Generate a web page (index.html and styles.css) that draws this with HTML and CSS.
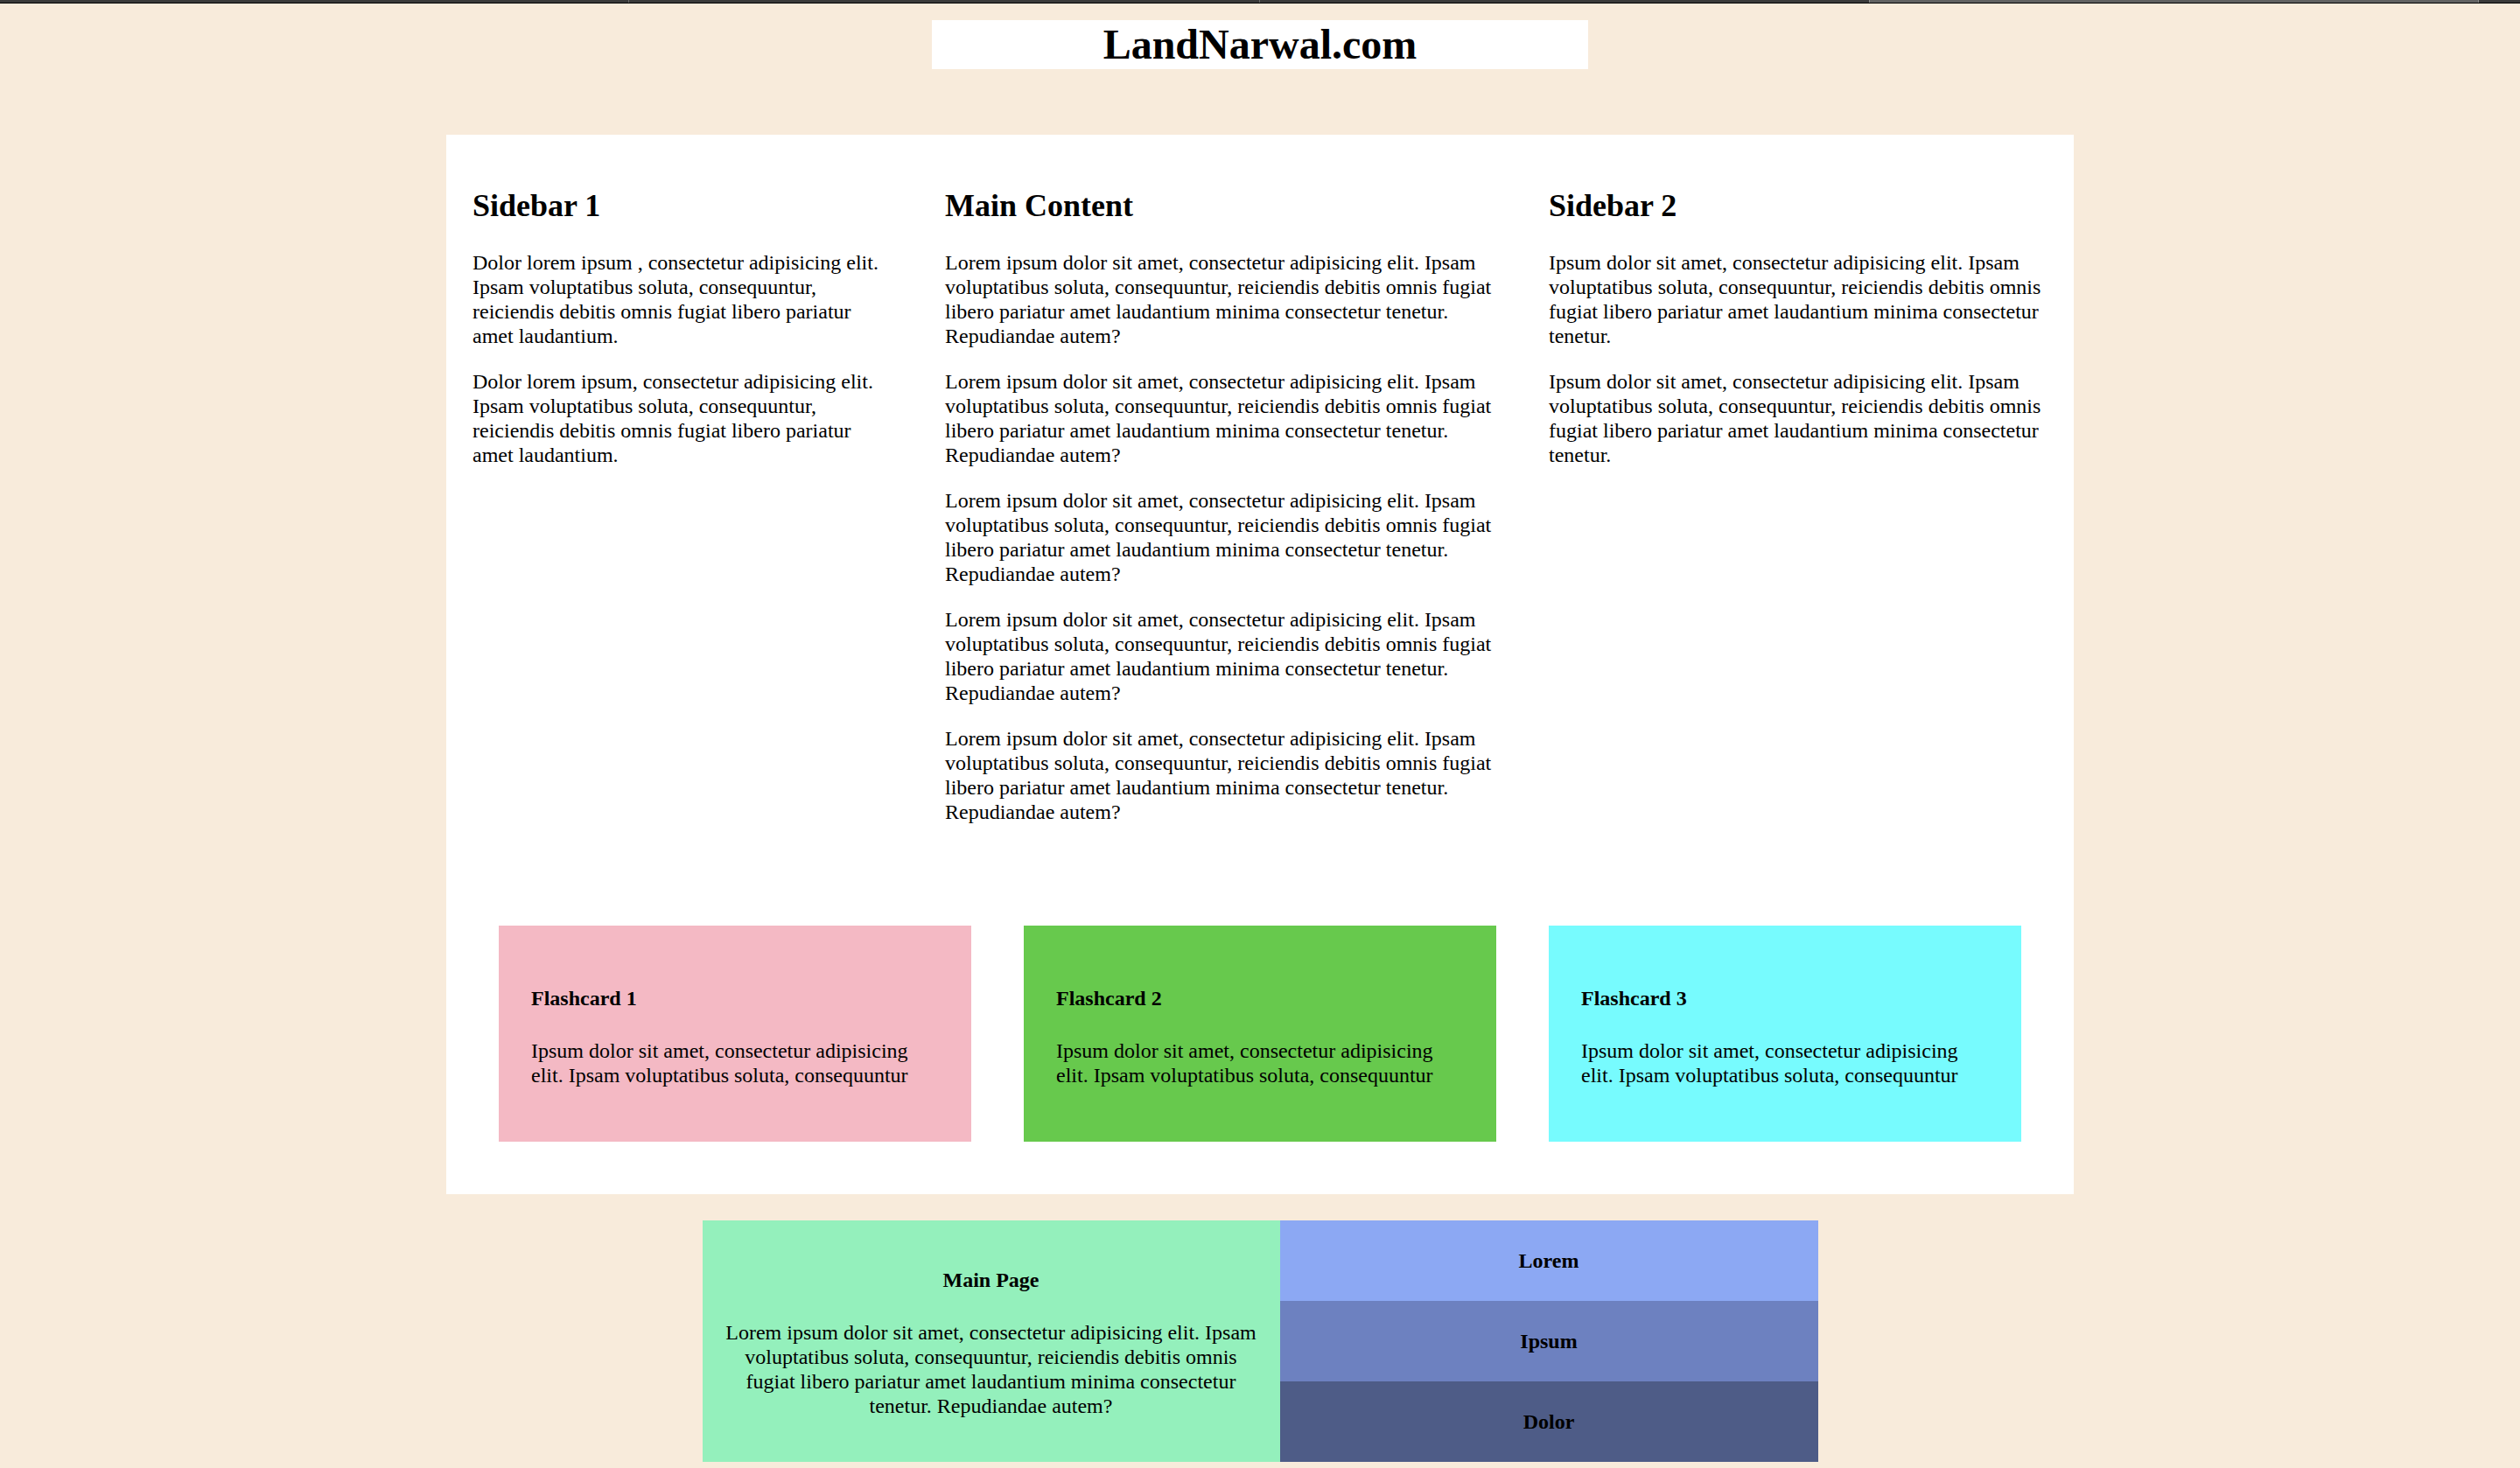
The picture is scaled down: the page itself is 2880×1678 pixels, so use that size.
FILE: index.html
```html
<!DOCTYPE html>
<html lang="en">
<head>
<meta charset="utf-8">
<title>LandNarwal.com</title>
<link rel="stylesheet" href="styles.css">
</head>
<body>
<div class="chrome">
  <div class="tab tab-1"></div>
  <div class="tab tab-2"></div>
  <div class="tab tab-3"></div>
  <div class="tab tab-active"></div>
  <div class="tab tab-rest"></div>
</div>

<header class="site-header">
  <h1 class="site-title">LandNarwal.com</h1>
</header>

<main class="page">
  <div class="columns">
    <section class="col col-side1">
      <h2>Sidebar 1</h2>
      <p>Dolor lorem ipsum , consectetur adipisicing elit. Ipsam voluptatibus soluta, consequuntur, reiciendis debitis omnis fugiat libero pariatur amet laudantium.</p>
      <p>Dolor lorem ipsum, consectetur adipisicing elit. Ipsam voluptatibus soluta, consequuntur, reiciendis debitis omnis fugiat libero pariatur amet laudantium.</p>
    </section>
    <section class="col col-main">
      <h2>Main Content</h2>
      <p>Lorem ipsum dolor sit amet, consectetur adipisicing elit. Ipsam voluptatibus soluta, consequuntur, reiciendis debitis omnis fugiat libero pariatur amet laudantium minima consectetur tenetur. Repudiandae autem?</p>
      <p>Lorem ipsum dolor sit amet, consectetur adipisicing elit. Ipsam voluptatibus soluta, consequuntur, reiciendis debitis omnis fugiat libero pariatur amet laudantium minima consectetur tenetur. Repudiandae autem?</p>
      <p>Lorem ipsum dolor sit amet, consectetur adipisicing elit. Ipsam voluptatibus soluta, consequuntur, reiciendis debitis omnis fugiat libero pariatur amet laudantium minima consectetur tenetur. Repudiandae autem?</p>
      <p>Lorem ipsum dolor sit amet, consectetur adipisicing elit. Ipsam voluptatibus soluta, consequuntur, reiciendis debitis omnis fugiat libero pariatur amet laudantium minima consectetur tenetur. Repudiandae autem?</p>
      <p>Lorem ipsum dolor sit amet, consectetur adipisicing elit. Ipsam voluptatibus soluta, consequuntur, reiciendis debitis omnis fugiat libero pariatur amet laudantium minima consectetur tenetur. Repudiandae autem?</p>
    </section>
    <section class="col col-side2">
      <h2>Sidebar 2</h2>
      <p>Ipsum dolor sit amet, consectetur adipisicing elit. Ipsam voluptatibus soluta, consequuntur, reiciendis debitis omnis fugiat libero pariatur amet laudantium minima consectetur tenetur.</p>
      <p>Ipsum dolor sit amet, consectetur adipisicing elit. Ipsam voluptatibus soluta, consequuntur, reiciendis debitis omnis fugiat libero pariatur amet laudantium minima consectetur tenetur.</p>
    </section>
  </div>

  <div class="flashcards">
    <div class="card card-pink">
      <h4>Flashcard 1</h4>
      <p>Ipsum dolor sit amet, consectetur adipisicing elit. Ipsam voluptatibus soluta, consequuntur</p>
    </div>
    <div class="card card-green">
      <h4>Flashcard 2</h4>
      <p>Ipsum dolor sit amet, consectetur adipisicing elit. Ipsam voluptatibus soluta, consequuntur</p>
    </div>
    <div class="card card-cyan">
      <h4>Flashcard 3</h4>
      <p>Ipsum dolor sit amet, consectetur adipisicing elit. Ipsam voluptatibus soluta, consequuntur</p>
    </div>
  </div>
</main>

<footer class="footer">
  <div class="footer-main">
    <h4>Main Page</h4>
    <p>Lorem ipsum dolor sit amet, consectetur adipisicing elit. Ipsam voluptatibus soluta, consequuntur, reiciendis debitis omnis fugiat libero pariatur amet laudantium minima consectetur tenetur. Repudiandae autem?</p>
  </div>
  <nav class="footer-nav">
    <div class="nav-item nav-lorem"><h4>Lorem</h4></div>
    <div class="nav-item nav-ipsum"><h4>Ipsum</h4></div>
    <div class="nav-item nav-dolor"><h4>Dolor</h4></div>
  </nav>
</footer>
</body>
</html>
```

FILE: styles.css
```css
html, body {
  margin: 0;
  padding: 0;
}

body {
  background: #f8ebdb;
  color: #000;
  font-family: "Liberation Serif", "Times New Roman", serif;
  font-size: 24px;
  line-height: 1.1667;
  padding-bottom: 7px;
}

/* thin browser-like strip at the very top */
.chrome {
  display: flex;
  height: 3px;
  background: #3a3a3a;
  border-bottom: 1px solid #000;
}
.tab {
  height: 3px;
}
.tab-1 { width: 718px; }
.tab-2 { width: 720px; border-left: 1px solid #6a6a6a; }
.tab-3 { width: 696px; border-left: 1px solid #6a6a6a; }
.tab-active { width: 695px; background: #626262; border-left: 1px solid #8a8a8a; border-right: 1px solid #8a8a8a; }
.tab-rest { flex: 1; }

/* header */
.site-header {
  display: flex;
  justify-content: center;
  padding-top: 19px;
}
.site-title {
  margin: 0;
  width: 750px;
  background: #fff;
  text-align: center;
  font-size: 48px;
  font-weight: bold;
}

/* main white container */
.page {
  width: 1860px;
  margin: 75px auto 0;
  background: #fff;
}

.columns {
  display: grid;
  grid-template-columns: 540px 690px 630px;
}
.col {
  padding: 30px;
}
.col h2 {
  font-size: 36px;
  margin: 30px 0;
}
.col p {
  margin: 24px 0;
}

.flashcards {
  display: flex;
  gap: 60px;
  padding: 62px 60px 60px;
}
.card {
  width: 540px;
  box-sizing: border-box;
  padding: 37px 37px 38px;
}
.card h4 {
  font-size: 24px;
  margin: 32px 0;
}
.card p {
  margin: 24px 0;
}
.card-pink { background: #f4b9c4; }
.card-green { background: #67c94d; }
.card-cyan { background: #77fbfe; }

/* footer */
.footer {
  display: flex;
  width: 1275px;
  margin: 30px auto 0;
}
.footer-main {
  width: 660px;
  box-sizing: border-box;
  padding: 22px 24px 0;
  background: #94f0bc;
  text-align: center;
}
.footer-main h4 {
  font-size: 24px;
  margin: 32px 0;
}
.footer-main p {
  margin: 24px 0;
}
.footer-nav {
  width: 615px;
  display: flex;
  flex-direction: column;
}
.nav-item {
  display: flow-root;
  text-align: center;
}
.nav-item h4 {
  font-size: 24px;
  margin: 32px 0;
}
.nav-lorem { background: #8ca8f3; }
.nav-ipsum { background: #6d81c0; }
.nav-dolor { background: #4e5c87; }
```
